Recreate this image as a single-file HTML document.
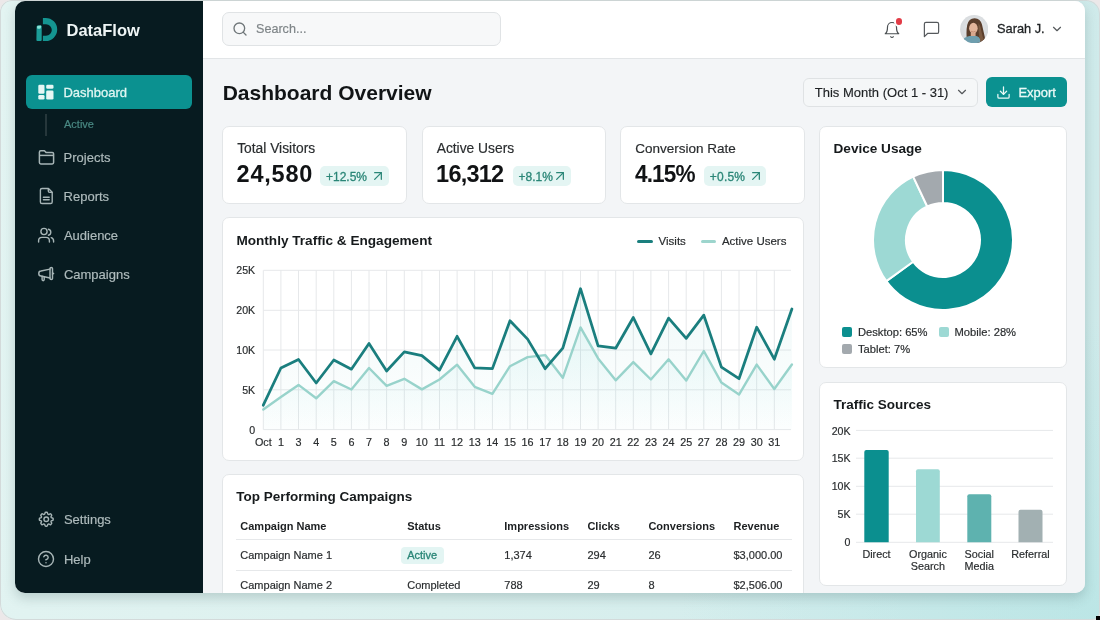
<!DOCTYPE html>
<html><head><meta charset="utf-8"><style>
*{margin:0;padding:0;box-sizing:border-box}
html,body{width:1100px;height:620px;overflow:hidden;background:#ece8e9;font-family:"Liberation Sans", sans-serif}
.a{position:absolute}
.t{position:absolute;white-space:nowrap}
.wrap{will-change:transform}
</style></head><body>

<div class="a" style="left:0px;top:0px;width:1100px;height:620px;border-radius:12px 14px 8px 16px;background:radial-gradient(ellipse 420px 300px at 100% 100%,rgba(180,228,228,0.7),rgba(180,228,228,0) 100%),linear-gradient(100deg,#e3f4f2 0%,#dbf0ee 45%,#d2ecec 80%,#cde9e9 100%);box-shadow:inset 0 0 0 1px #d3dada;"></div>
<div class="a" style="left:15px;top:1px;width:1070px;height:592px;border-radius:10px;box-shadow:0 5px 12px rgba(60,90,90,0.24);background:#f3f5f7;"></div>
<div class="a" style="left:15px;top:1px;width:1070px;height:592px;border-radius:10px;overflow:hidden;background:#f3f5f7">
<div class="a wrap" style="left:-15px;top:-1px;width:1100px;height:620px">
<div class="a" style="left:15px;top:1px;width:188px;height:592px;background:#071b20;"></div>
<svg class="a" style="left:34px;top:16px;" width="26" height="28" viewBox="0 0 26 28" fill="none"><path d="M8.9 2 H11.7 A11.5 11.5 0 0 1 11.7 25 H8.9 V19.8 H12 A5.8 5.8 0 0 0 12 8.2 H8.9 Z" fill="#149591"/>
<path d="M2.6 10.8 Q2.6 9.8 3.6 9.6 L6.8 9.4 Q7.7 9.4 7.7 10.3 V24 Q7.7 25 6.7 25 H3.4 Q2.4 25 2.4 24 Z" fill="#1b9d98"/>
<path d="M3 10.6 Q3.2 9.9 4 9.8 L6.6 9.6 Q7.2 9.6 7.1 10.4 L6.8 12.2 Q5 13 3.2 12.6 Z" fill="#86e3d6"/></svg>
<div class="t" style="left:66.50px;top:22.03px;font-size:16.5px;line-height:16.5px;color:#eef5f5;font-weight:700;">DataFlow</div>
<div class="a" style="left:26px;top:75px;width:166px;height:34px;border-radius:6px;background:#0b9190;"></div>
<svg class="a" style="left:38px;top:84px;" width="16" height="16" viewBox="0 0 16 16" fill="none"><rect x="0.3" y="0.7" width="6.2" height="9" rx="1.3" fill="#e6f7f4"/>
<rect x="0.3" y="10.9" width="6.2" height="4.6" rx="1.3" fill="#e6f7f4"/>
<rect x="8.2" y="0.7" width="7.3" height="4.1" rx="1.3" fill="#e6f7f4"/>
<rect x="8.2" y="6.5" width="7.3" height="9" rx="1.3" fill="#e6f7f4"/></svg>
<div class="t" style="left:63.40px;top:86.00px;font-size:13px;line-height:13px;color:#dff6f2;font-weight:400;-webkit-text-stroke:0.3px currentColor;">Dashboard</div>
<div class="a" style="left:45px;top:114px;width:2px;height:22px;background:#26373b;"></div>
<div class="t" style="left:64.00px;top:118.69px;font-size:11px;line-height:11px;color:#4a8a84;font-weight:400;-webkit-text-stroke:0.18px currentColor;">Active</div>
<svg class="a" style="left:36.6px;top:149px;" width="18" height="16" viewBox="0 0 18 16" fill="none"><g stroke="#a7b5b6" stroke-width="1.5" stroke-linejoin="round" fill="none">
<path d="M2.4 3.2 Q2.4 1.8 3.8 1.8 H7.4 L9 3.4 H15.2 Q16.6 3.4 16.6 4.8 V13.6 Q16.6 15 15.2 15 H3.8 Q2.4 15 2.4 13.6 Z"/>
<path d="M2.4 6.4 H16.6"/></g></svg>
<div class="t" style="left:63.60px;top:151.00px;font-size:13px;line-height:13px;color:#aebbbc;font-weight:400;-webkit-text-stroke:0.18px currentColor;">Projects</div>
<svg class="a" style="left:38px;top:187px;" width="17" height="18" viewBox="0 0 17 18" fill="none"><g stroke="#a7b5b6" stroke-width="1.4" stroke-linejoin="round" stroke-linecap="round" fill="none">
<path d="M10.5 1.5 H4 Q2.4 1.5 2.4 3.1 V14.9 Q2.4 16.5 4 16.5 H12.6 Q14.2 16.5 14.2 14.9 V5.2 Z"/>
<path d="M10.3 1.7 V4 Q10.3 5.4 11.7 5.4 H14"/>
<path d="M5.4 10.2 H11.2"/><path d="M5.4 12.8 H11.2"/></g></svg>
<div class="t" style="left:63.60px;top:190.00px;font-size:13px;line-height:13px;color:#aebbbc;font-weight:400;-webkit-text-stroke:0.18px currentColor;">Reports</div>
<svg class="a" style="left:37px;top:227px;" width="18" height="16" viewBox="0 0 18 16" fill="none"><g stroke="#a7b5b6" stroke-width="1.4" stroke-linecap="round" fill="none">
<circle cx="7" cy="4.5" r="3.1"/>
<path d="M1.6 15 V13.8 Q1.6 10.4 5 10.4 H9 Q12.4 10.4 12.4 13.8 V15"/>
<path d="M11.4 2.2 Q13.8 2.8 13.8 5.2 Q13.8 7.6 11.4 8.2"/>
<path d="M14.2 10.7 Q16.6 11.4 16.6 13.9 V15"/></g></svg>
<div class="t" style="left:63.90px;top:229.00px;font-size:13px;line-height:13px;color:#aebbbc;font-weight:400;-webkit-text-stroke:0.18px currentColor;">Audience</div>
<svg class="a" style="left:34px;top:262px;" width="24" height="24" viewBox="0 0 24 24" fill="none"><g stroke="#a7b5b6" stroke-width="1.45" stroke-linejoin="round" stroke-linecap="round" fill="none">
<path d="M16 7.1 L7 9 Q4.8 9 4.8 11.5 Q4.8 14 7 14 L16 16"/>
<path d="M16 6.6 Q16 5.5 17.25 5.5 Q18.5 5.5 18.5 6.6 V16.4 Q18.5 17.5 17.25 17.5 Q16 17.5 16 16.4 Z"/>
<path d="M18.5 10.8 L19.6 11.5 L18.5 12.2"/>
<path d="M8.1 14.3 V17.6 Q8.1 18.7 9.15 18.7 Q10.2 18.7 10.2 17.6 V14.7"/></g></svg>
<div class="t" style="left:63.90px;top:268.00px;font-size:13px;line-height:13px;color:#aebbbc;font-weight:400;-webkit-text-stroke:0.18px currentColor;">Campaigns</div>
<svg class="a" style="left:36.75px;top:510.15px;" width="18.5" height="18.5" viewBox="0 0 24 24" fill="none"><g stroke="#a7b5b6" stroke-width="1.8" stroke-linecap="round" stroke-linejoin="round"><path d="M10.343 3.94c.09-.542.56-.94 1.11-.94h1.093c.55 0 1.02.398 1.11.94l.149.894c.07.424.384.764.78.93.398.164.855.142 1.205-.108l.737-.527a1.125 1.125 0 0 1 1.45.12l.773.774c.39.389.44 1.002.12 1.45l-.527.737c-.25.35-.272.806-.107 1.204.165.397.505.71.93.78l.893.15c.543.09.94.559.94 1.109v1.094c0 .55-.397 1.02-.94 1.11l-.894.149c-.424.07-.764.383-.929.78-.165.398-.143.854.107 1.204l.527.738c.32.447.269 1.06-.12 1.45l-.774.773a1.125 1.125 0 0 1-1.449.12l-.738-.527c-.35-.25-.806-.272-1.203-.107-.398.165-.71.505-.781.929l-.149.894c-.09.542-.56.94-1.11.94h-1.094c-.55 0-1.019-.398-1.11-.94l-.148-.894c-.071-.424-.384-.764-.781-.93-.398-.164-.854-.142-1.204.108l-.738.527c-.447.32-1.06.269-1.45-.12l-.773-.774a1.125 1.125 0 0 1-.12-1.45l.527-.737c.25-.35.272-.806.108-1.204-.165-.397-.506-.71-.93-.78l-.894-.15c-.542-.09-.94-.56-.94-1.109v-1.094c0-.55.398-1.02.94-1.11l.894-.149c.424-.07.765-.383.93-.78.165-.398.143-.854-.108-1.204l-.526-.738a1.125 1.125 0 0 1 .12-1.45l.773-.773a1.125 1.125 0 0 1 1.45-.12l.737.527c.35.25.807.272 1.204.107.397-.165.71-.505.78-.929l.15-.894Z"/><path d="M15 12a3 3 0 1 1-6 0 3 3 0 0 1 6 0Z"/></g></svg>
<div class="t" style="left:63.90px;top:513.00px;font-size:13px;line-height:13px;color:#aebbbc;font-weight:400;-webkit-text-stroke:0.18px currentColor;">Settings</div>
<svg class="a" style="left:37px;top:550px;" width="18" height="18" viewBox="0 0 24 24" fill="none"><g stroke="#a7b5b6" stroke-width="1.9" stroke-linecap="round" stroke-linejoin="round"><circle cx="12" cy="12" r="10"/><path d="M9.09 9a3 3 0 0 1 5.83 1c0 2-3 3-3 3"/><path d="M12 17h.01"/></g></svg>
<div class="t" style="left:63.90px;top:553.00px;font-size:13px;line-height:13px;color:#aebbbc;font-weight:400;-webkit-text-stroke:0.18px currentColor;">Help</div>
<div class="a" style="left:203px;top:1px;width:882px;height:58px;background:#ffffff;border-bottom:1px solid #e2e5e7;"></div>
<div class="a" style="left:222px;top:12px;width:279px;height:34px;border-radius:7px;background:#f7f8f9;border:1px solid #e0e3e5;"></div>
<svg class="a" style="left:232px;top:21px;" width="16" height="16" viewBox="0 0 24 24" fill="none"><g stroke="#6f7679" stroke-width="2" stroke-linecap="round" stroke-linejoin="round"><circle cx="11" cy="11" r="8"/><path d="m21 21-4.3-4.3"/></g></svg>
<div class="t" style="left:256.00px;top:22.93px;font-size:12.6px;line-height:12.6px;color:#7f8588;font-weight:400;-webkit-text-stroke:0.18px currentColor;">Search...</div>
<svg class="a" style="left:883px;top:21px;" width="18" height="18" viewBox="0 0 24 24" fill="none"><g stroke="#4a4f52" stroke-width="1.6" stroke-linecap="round" stroke-linejoin="round"><path d="M6 8a6 6 0 0 1 12 0c0 7 3 9 3 9H3s3-2 3-9"/><path d="M10.3 21a1.94 1.94 0 0 0 3.4 0"/></g></svg>
<div class="a" style="left:893.5px;top:16.3px;width:10.4px;height:10.4px;border-radius:50%;background:#e23b46;border:2px solid #fff"></div>
<svg class="a" style="left:922px;top:20px;" width="19" height="19" viewBox="0 0 24 24" fill="none"><g stroke="#55595c" stroke-width="1.5" stroke-linecap="round" stroke-linejoin="round"><path d="M21 15a2 2 0 0 1-2 2H7l-4 4V5a2 2 0 0 1 2-2h14a2 2 0 0 1 2 2z"/></g></svg>
<svg class="a" style="left:960px;top:14.5px;" width="28.4" height="28.4" viewBox="0 0 28.4 28.4" fill="none"><defs><clipPath id="av"><circle cx="14.2" cy="14.2" r="14.1"/></clipPath>
<radialGradient id="avbg" cx="0.5" cy="0.4" r="0.6"><stop offset="0" stop-color="#e6e8ea"/><stop offset="1" stop-color="#d3d7da"/></radialGradient></defs>
<g clip-path="url(#av)"><rect width="30" height="30" fill="url(#avbg)"/>
<path d="M6.8 24 Q6 16 7.2 10 Q8.6 3.4 14.6 3.2 Q20.6 3.4 22 9.6 Q23.2 15 24.6 21 Q25.6 25 23 28 L14 29 Z" fill="#5a3e2c"/>
<path d="M18.5 8 Q21.5 12 21.8 18 Q22.6 23 24.4 25.5 L20 27 Q19 21 18.5 15 Z" fill="#7a5a42"/>
<ellipse cx="13.4" cy="13.2" rx="4.3" ry="5.4" fill="#e2b59b"/>
<path d="M11 16.2 Q13.2 18 15.6 16.2" stroke="#b97d66" stroke-width="0.7" fill="none"/>
<path d="M10.8 18 H15.6 V22 H10.8 Z" fill="#d7a88e"/>
<path d="M1 30 Q2.5 21.8 9.5 21 H16.5 Q19 21.4 20 24 L20.5 30 Z" fill="#6e9eae"/></g></svg>
<div class="t" style="left:997.00px;top:22.76px;font-size:12.8px;line-height:12.8px;color:#1f2224;font-weight:400;-webkit-text-stroke:0.3px currentColor;">Sarah J.</div>
<svg class="a" style="left:1049.5px;top:21.5px;" width="14" height="14" viewBox="0 0 24 24" fill="none"><g stroke="#55595c" stroke-width="2" stroke-linecap="round" stroke-linejoin="round"><path d="m6 9 6 6 6-6"/></g></svg>
<div class="t" style="left:222.70px;top:81.92px;font-size:21px;line-height:21px;color:#111416;font-weight:700;">Dashboard Overview</div>
<div class="a" style="left:803px;top:77.5px;width:175px;height:29.0px;border-radius:6px;background:#f5f7f8;border:1px solid #dfe2e4;"></div>
<div class="t" style="left:814.80px;top:86.20px;font-size:13px;line-height:13px;color:#1e2123;font-weight:400;-webkit-text-stroke:0.15px currentColor;">This Month (Oct 1 - 31)</div>
<svg class="a" style="left:955px;top:85px;" width="14" height="14" viewBox="0 0 24 24" fill="none"><g stroke="#55595c" stroke-width="2" stroke-linecap="round" stroke-linejoin="round"><path d="m6 9 6 6 6-6"/></g></svg>
<div class="a" style="left:986px;top:77px;width:81px;height:29.5px;border-radius:6px;background:#0b9190;"></div>
<svg class="a" style="left:996px;top:84.5px;" width="15" height="15" viewBox="0 0 24 24" fill="none"><g stroke="#eafaf7" stroke-width="2" stroke-linecap="round" stroke-linejoin="round"><path d="M21 15v4a2 2 0 0 1-2 2H5a2 2 0 0 1-2-2v-4"/><polyline points="7 10 12 15 17 10"/><line x1="12" x2="12" y1="15" y2="3"/></g></svg>
<div class="t" style="left:1018.40px;top:86.20px;font-size:13px;line-height:13px;color:#eafaf7;font-weight:400;-webkit-text-stroke:0.3px currentColor;">Export</div>
<div class="a" style="left:222px;top:125.5px;width:185px;height:78.0px;border-radius:7px;background:#ffffff;border:1px solid #e3e6e8;"></div>
<div class="t" style="left:237.20px;top:141.92px;font-size:13.8px;line-height:13.8px;color:#2a2d2f;font-weight:400;-webkit-text-stroke:0.18px currentColor;">Total Visitors</div>
<div class="t" style="left:236.60px;top:163.21px;font-size:23.5px;line-height:23.5px;color:#111315;font-weight:700;letter-spacing:0.78px;">24,580</div>
<div class="a" style="left:320px;top:166px;width:68.60000000000002px;height:20.400000000000006px;border-radius:5px;background:#e4f5f3;"></div>
<div class="t" style="left:326.00px;top:170.84px;font-size:12px;line-height:12px;color:#2a8677;font-weight:400;-webkit-text-stroke:0.3px currentColor;">+12.5%</div>
<svg class="a" style="left:370px;top:168px;" width="16" height="16" viewBox="0 0 24 24" fill="none"><g stroke="#2a8677" stroke-width="1.9" stroke-linecap="round" stroke-linejoin="round"><path d="M7 7h10v10"/><path d="M7 17 17 7"/></g></svg>
<div class="a" style="left:421.5px;top:125.5px;width:184.5px;height:78.0px;border-radius:7px;background:#ffffff;border:1px solid #e3e6e8;"></div>
<div class="t" style="left:436.70px;top:141.92px;font-size:13.8px;line-height:13.8px;color:#2a2d2f;font-weight:400;-webkit-text-stroke:0.18px currentColor;">Active Users</div>
<div class="t" style="left:436.10px;top:163.21px;font-size:23.5px;line-height:23.5px;color:#111315;font-weight:700;letter-spacing:-0.78px;">16,312</div>
<div class="a" style="left:512.5px;top:166px;width:58.5px;height:20.400000000000006px;border-radius:5px;background:#e4f5f3;"></div>
<div class="t" style="left:518.50px;top:170.84px;font-size:12px;line-height:12px;color:#2a8677;font-weight:400;-webkit-text-stroke:0.3px currentColor;">+8.1%</div>
<svg class="a" style="left:552px;top:168px;" width="16" height="16" viewBox="0 0 24 24" fill="none"><g stroke="#2a8677" stroke-width="1.9" stroke-linecap="round" stroke-linejoin="round"><path d="M7 7h10v10"/><path d="M7 17 17 7"/></g></svg>
<div class="a" style="left:620px;top:125.5px;width:184.5px;height:78.0px;border-radius:7px;background:#ffffff;border:1px solid #e3e6e8;"></div>
<div class="t" style="left:635.20px;top:142.17px;font-size:13.5px;line-height:13.5px;color:#2a2d2f;font-weight:400;-webkit-text-stroke:0.18px currentColor;">Conversion Rate</div>
<div class="t" style="left:634.60px;top:163.21px;font-size:23.5px;line-height:23.5px;color:#111315;font-weight:700;letter-spacing:-0.9px;transform:scaleX(0.96);transform-origin:0 0;">4.15%</div>
<div class="a" style="left:703.8px;top:166px;width:61.90000000000009px;height:20.400000000000006px;border-radius:5px;background:#e4f5f3;"></div>
<div class="t" style="left:709.80px;top:170.84px;font-size:12px;line-height:12px;color:#2a8677;font-weight:400;letter-spacing:0.2px;-webkit-text-stroke:0.3px currentColor;">+0.5%</div>
<svg class="a" style="left:747.7px;top:168px;" width="16" height="16" viewBox="0 0 24 24" fill="none"><g stroke="#2a8677" stroke-width="1.9" stroke-linecap="round" stroke-linejoin="round"><path d="M7 7h10v10"/><path d="M7 17 17 7"/></g></svg>
<div class="a" style="left:222px;top:217px;width:582px;height:243.5px;border-radius:7px;background:#ffffff;border:1px solid #e3e6e8;"></div>
<div class="t" style="left:236.40px;top:233.89px;font-size:13.6px;line-height:13.6px;color:#161a1c;font-weight:700;">Monthly Traffic &amp; Engagement</div>
<div class="a" style="left:636.8px;top:239.5px;width:16.0px;height:3.0px;border-radius:2px;background:#1a7f7e;"></div>
<div class="t" style="left:658.60px;top:236.07px;font-size:11.5px;line-height:11.5px;color:#2a2d2f;font-weight:400;-webkit-text-stroke:0.18px currentColor;">Visits</div>
<div class="a" style="left:700.6px;top:239.5px;width:15.699999999999932px;height:3.0px;border-radius:2px;background:#9dd5cd;"></div>
<div class="t" style="left:721.90px;top:236.07px;font-size:11.5px;line-height:11.5px;color:#2a2d2f;font-weight:400;-webkit-text-stroke:0.18px currentColor;">Active Users</div>
<svg class="a" style="left:0px;top:0px;" width="1100" height="620" viewBox="0 0 1100 620" fill="none"><defs>
<linearGradient id="gv" x1="0" y1="0" x2="0" y2="1"><stop offset="0" stop-color="#22a6a6" stop-opacity="0.07"/><stop offset="1" stop-color="#22a6a6" stop-opacity="0"/></linearGradient>
<linearGradient id="gu" x1="0" y1="0" x2="0" y2="1"><stop offset="0" stop-color="#5cd0cc" stop-opacity="0.10"/><stop offset="1" stop-color="#5cd0cc" stop-opacity="0.02"/></linearGradient>
</defs>
<line x1="263.4" x2="791" y1="270.3" y2="270.3" stroke="#e6e8ea" stroke-width="1"/><line x1="263.4" x2="791" y1="310.3" y2="310.3" stroke="#e6e8ea" stroke-width="1"/><line x1="263.4" x2="791" y1="350" y2="350" stroke="#e6e8ea" stroke-width="1"/><line x1="263.4" x2="791" y1="389.8" y2="389.8" stroke="#e6e8ea" stroke-width="1"/><line x1="263.4" x2="791" y1="429.6" y2="429.6" stroke="#e6e8ea" stroke-width="1"/><line x1="263.3" x2="263.3" y1="270.3" y2="429.6" stroke="#e6e8ea" stroke-width="1"/><line x1="280.9" x2="280.9" y1="270.3" y2="429.6" stroke="#e6e8ea" stroke-width="1"/><line x1="298.5" x2="298.5" y1="270.3" y2="429.6" stroke="#e6e8ea" stroke-width="1"/><line x1="316.2" x2="316.2" y1="270.3" y2="429.6" stroke="#e6e8ea" stroke-width="1"/><line x1="333.8" x2="333.8" y1="270.3" y2="429.6" stroke="#e6e8ea" stroke-width="1"/><line x1="351.4" x2="351.4" y1="270.3" y2="429.6" stroke="#e6e8ea" stroke-width="1"/><line x1="369.0" x2="369.0" y1="270.3" y2="429.6" stroke="#e6e8ea" stroke-width="1"/><line x1="386.6" x2="386.6" y1="270.3" y2="429.6" stroke="#e6e8ea" stroke-width="1"/><line x1="404.3" x2="404.3" y1="270.3" y2="429.6" stroke="#e6e8ea" stroke-width="1"/><line x1="421.9" x2="421.9" y1="270.3" y2="429.6" stroke="#e6e8ea" stroke-width="1"/><line x1="439.5" x2="439.5" y1="270.3" y2="429.6" stroke="#e6e8ea" stroke-width="1"/><line x1="457.1" x2="457.1" y1="270.3" y2="429.6" stroke="#e6e8ea" stroke-width="1"/><line x1="474.7" x2="474.7" y1="270.3" y2="429.6" stroke="#e6e8ea" stroke-width="1"/><line x1="492.4" x2="492.4" y1="270.3" y2="429.6" stroke="#e6e8ea" stroke-width="1"/><line x1="510.0" x2="510.0" y1="270.3" y2="429.6" stroke="#e6e8ea" stroke-width="1"/><line x1="527.6" x2="527.6" y1="270.3" y2="429.6" stroke="#e6e8ea" stroke-width="1"/><line x1="545.2" x2="545.2" y1="270.3" y2="429.6" stroke="#e6e8ea" stroke-width="1"/><line x1="562.8" x2="562.8" y1="270.3" y2="429.6" stroke="#e6e8ea" stroke-width="1"/><line x1="580.5" x2="580.5" y1="270.3" y2="429.6" stroke="#e6e8ea" stroke-width="1"/><line x1="598.1" x2="598.1" y1="270.3" y2="429.6" stroke="#e6e8ea" stroke-width="1"/><line x1="615.7" x2="615.7" y1="270.3" y2="429.6" stroke="#e6e8ea" stroke-width="1"/><line x1="633.3" x2="633.3" y1="270.3" y2="429.6" stroke="#e6e8ea" stroke-width="1"/><line x1="650.9" x2="650.9" y1="270.3" y2="429.6" stroke="#e6e8ea" stroke-width="1"/><line x1="668.6" x2="668.6" y1="270.3" y2="429.6" stroke="#e6e8ea" stroke-width="1"/><line x1="686.2" x2="686.2" y1="270.3" y2="429.6" stroke="#e6e8ea" stroke-width="1"/><line x1="703.8" x2="703.8" y1="270.3" y2="429.6" stroke="#e6e8ea" stroke-width="1"/><line x1="721.4" x2="721.4" y1="270.3" y2="429.6" stroke="#e6e8ea" stroke-width="1"/><line x1="739.0" x2="739.0" y1="270.3" y2="429.6" stroke="#e6e8ea" stroke-width="1"/><line x1="756.7" x2="756.7" y1="270.3" y2="429.6" stroke="#e6e8ea" stroke-width="1"/><line x1="774.3" x2="774.3" y1="270.3" y2="429.6" stroke="#e6e8ea" stroke-width="1"/>
<polygon points="263.3,429.6 263.3,405.2 280.9,368 298.5,359.5 316.2,383 333.8,360 351.4,369.2 369.0,343.5 386.6,371 404.3,351.9 421.9,355.6 439.5,370.1 457.1,336.3 474.7,367.9 492.4,368.6 510.0,320.7 527.6,339.1 545.2,368.7 562.8,348.2 580.5,288.7 598.1,345.8 615.7,348.2 633.3,317.5 650.9,353.9 668.6,318.1 686.2,338.4 703.8,315.2 721.4,367.1 739.0,378.7 756.7,327.2 774.3,359.2 791.9,309 791.9,429.6" fill="url(#gv)"/>
<polygon points="263.3,429.6 263.3,409.6 280.9,397 298.5,384.9 316.2,398.3 333.8,381.1 351.4,389.5 369.0,368 386.6,385.8 404.3,378.8 421.9,389.4 439.5,379.5 457.1,364.7 474.7,386.8 492.4,393.8 510.0,366.2 527.6,357.1 545.2,355.1 562.8,377.8 580.5,327.4 598.1,358.4 615.7,380.3 633.3,362.1 650.9,379.5 668.6,359.3 686.2,380.6 703.8,351 721.4,382.6 739.0,394.6 756.7,364.6 774.3,389 791.9,364.5 791.9,429.6" fill="url(#gu)"/>
<polyline points="263.3,409.6 280.9,397 298.5,384.9 316.2,398.3 333.8,381.1 351.4,389.5 369.0,368 386.6,385.8 404.3,378.8 421.9,389.4 439.5,379.5 457.1,364.7 474.7,386.8 492.4,393.8 510.0,366.2 527.6,357.1 545.2,355.1 562.8,377.8 580.5,327.4 598.1,358.4 615.7,380.3 633.3,362.1 650.9,379.5 668.6,359.3 686.2,380.6 703.8,351 721.4,382.6 739.0,394.6 756.7,364.6 774.3,389 791.9,364.5" stroke="#98d3cb" stroke-width="2.4" stroke-linejoin="round" stroke-linecap="round" fill="none"/>
<polyline points="263.3,405.2 280.9,368 298.5,359.5 316.2,383 333.8,360 351.4,369.2 369.0,343.5 386.6,371 404.3,351.9 421.9,355.6 439.5,370.1 457.1,336.3 474.7,367.9 492.4,368.6 510.0,320.7 527.6,339.1 545.2,368.7 562.8,348.2 580.5,288.7 598.1,345.8 615.7,348.2 633.3,317.5 650.9,353.9 668.6,318.1 686.2,338.4 703.8,315.2 721.4,367.1 739.0,378.7 756.7,327.2 774.3,359.2 791.9,309" stroke="#1a7e7e" stroke-width="2.75" stroke-linejoin="round" stroke-linecap="round" fill="none"/>
</svg>
<div class="t" style="left:255.20px;top:265.33px;font-size:10.6px;line-height:10.6px;color:#2a2d2f;font-weight:400;transform:translateX(-100%);-webkit-text-stroke:0.18px currentColor;">25K</div>
<div class="t" style="left:255.20px;top:305.23px;font-size:10.6px;line-height:10.6px;color:#2a2d2f;font-weight:400;transform:translateX(-100%);-webkit-text-stroke:0.18px currentColor;">20K</div>
<div class="t" style="left:255.20px;top:345.03px;font-size:10.6px;line-height:10.6px;color:#2a2d2f;font-weight:400;transform:translateX(-100%);-webkit-text-stroke:0.18px currentColor;">10K</div>
<div class="t" style="left:255.20px;top:384.83px;font-size:10.6px;line-height:10.6px;color:#2a2d2f;font-weight:400;transform:translateX(-100%);-webkit-text-stroke:0.18px currentColor;">5K</div>
<div class="t" style="left:255.20px;top:424.63px;font-size:10.6px;line-height:10.6px;color:#2a2d2f;font-weight:400;transform:translateX(-100%);-webkit-text-stroke:0.18px currentColor;">0</div>
<div class="t" style="left:263.30px;top:436.86px;font-size:10.8px;line-height:10.8px;color:#2a2d2f;font-weight:400;transform:translateX(-50%);-webkit-text-stroke:0.18px currentColor;">Oct</div>
<div class="t" style="left:280.92px;top:436.86px;font-size:10.8px;line-height:10.8px;color:#2a2d2f;font-weight:400;transform:translateX(-50%);-webkit-text-stroke:0.18px currentColor;">1</div>
<div class="t" style="left:298.54px;top:436.86px;font-size:10.8px;line-height:10.8px;color:#2a2d2f;font-weight:400;transform:translateX(-50%);-webkit-text-stroke:0.18px currentColor;">3</div>
<div class="t" style="left:316.16px;top:436.86px;font-size:10.8px;line-height:10.8px;color:#2a2d2f;font-weight:400;transform:translateX(-50%);-webkit-text-stroke:0.18px currentColor;">4</div>
<div class="t" style="left:333.78px;top:436.86px;font-size:10.8px;line-height:10.8px;color:#2a2d2f;font-weight:400;transform:translateX(-50%);-webkit-text-stroke:0.18px currentColor;">5</div>
<div class="t" style="left:351.40px;top:436.86px;font-size:10.8px;line-height:10.8px;color:#2a2d2f;font-weight:400;transform:translateX(-50%);-webkit-text-stroke:0.18px currentColor;">6</div>
<div class="t" style="left:369.02px;top:436.86px;font-size:10.8px;line-height:10.8px;color:#2a2d2f;font-weight:400;transform:translateX(-50%);-webkit-text-stroke:0.18px currentColor;">7</div>
<div class="t" style="left:386.64px;top:436.86px;font-size:10.8px;line-height:10.8px;color:#2a2d2f;font-weight:400;transform:translateX(-50%);-webkit-text-stroke:0.18px currentColor;">8</div>
<div class="t" style="left:404.26px;top:436.86px;font-size:10.8px;line-height:10.8px;color:#2a2d2f;font-weight:400;transform:translateX(-50%);-webkit-text-stroke:0.18px currentColor;">9</div>
<div class="t" style="left:421.88px;top:436.86px;font-size:10.8px;line-height:10.8px;color:#2a2d2f;font-weight:400;transform:translateX(-50%);-webkit-text-stroke:0.18px currentColor;">10</div>
<div class="t" style="left:439.50px;top:436.86px;font-size:10.8px;line-height:10.8px;color:#2a2d2f;font-weight:400;transform:translateX(-50%);-webkit-text-stroke:0.18px currentColor;">11</div>
<div class="t" style="left:457.12px;top:436.86px;font-size:10.8px;line-height:10.8px;color:#2a2d2f;font-weight:400;transform:translateX(-50%);-webkit-text-stroke:0.18px currentColor;">12</div>
<div class="t" style="left:474.74px;top:436.86px;font-size:10.8px;line-height:10.8px;color:#2a2d2f;font-weight:400;transform:translateX(-50%);-webkit-text-stroke:0.18px currentColor;">13</div>
<div class="t" style="left:492.36px;top:436.86px;font-size:10.8px;line-height:10.8px;color:#2a2d2f;font-weight:400;transform:translateX(-50%);-webkit-text-stroke:0.18px currentColor;">14</div>
<div class="t" style="left:509.98px;top:436.86px;font-size:10.8px;line-height:10.8px;color:#2a2d2f;font-weight:400;transform:translateX(-50%);-webkit-text-stroke:0.18px currentColor;">15</div>
<div class="t" style="left:527.60px;top:436.86px;font-size:10.8px;line-height:10.8px;color:#2a2d2f;font-weight:400;transform:translateX(-50%);-webkit-text-stroke:0.18px currentColor;">16</div>
<div class="t" style="left:545.22px;top:436.86px;font-size:10.8px;line-height:10.8px;color:#2a2d2f;font-weight:400;transform:translateX(-50%);-webkit-text-stroke:0.18px currentColor;">17</div>
<div class="t" style="left:562.84px;top:436.86px;font-size:10.8px;line-height:10.8px;color:#2a2d2f;font-weight:400;transform:translateX(-50%);-webkit-text-stroke:0.18px currentColor;">18</div>
<div class="t" style="left:580.46px;top:436.86px;font-size:10.8px;line-height:10.8px;color:#2a2d2f;font-weight:400;transform:translateX(-50%);-webkit-text-stroke:0.18px currentColor;">19</div>
<div class="t" style="left:598.08px;top:436.86px;font-size:10.8px;line-height:10.8px;color:#2a2d2f;font-weight:400;transform:translateX(-50%);-webkit-text-stroke:0.18px currentColor;">20</div>
<div class="t" style="left:615.70px;top:436.86px;font-size:10.8px;line-height:10.8px;color:#2a2d2f;font-weight:400;transform:translateX(-50%);-webkit-text-stroke:0.18px currentColor;">21</div>
<div class="t" style="left:633.32px;top:436.86px;font-size:10.8px;line-height:10.8px;color:#2a2d2f;font-weight:400;transform:translateX(-50%);-webkit-text-stroke:0.18px currentColor;">22</div>
<div class="t" style="left:650.94px;top:436.86px;font-size:10.8px;line-height:10.8px;color:#2a2d2f;font-weight:400;transform:translateX(-50%);-webkit-text-stroke:0.18px currentColor;">23</div>
<div class="t" style="left:668.56px;top:436.86px;font-size:10.8px;line-height:10.8px;color:#2a2d2f;font-weight:400;transform:translateX(-50%);-webkit-text-stroke:0.18px currentColor;">24</div>
<div class="t" style="left:686.18px;top:436.86px;font-size:10.8px;line-height:10.8px;color:#2a2d2f;font-weight:400;transform:translateX(-50%);-webkit-text-stroke:0.18px currentColor;">25</div>
<div class="t" style="left:703.80px;top:436.86px;font-size:10.8px;line-height:10.8px;color:#2a2d2f;font-weight:400;transform:translateX(-50%);-webkit-text-stroke:0.18px currentColor;">27</div>
<div class="t" style="left:721.42px;top:436.86px;font-size:10.8px;line-height:10.8px;color:#2a2d2f;font-weight:400;transform:translateX(-50%);-webkit-text-stroke:0.18px currentColor;">28</div>
<div class="t" style="left:739.04px;top:436.86px;font-size:10.8px;line-height:10.8px;color:#2a2d2f;font-weight:400;transform:translateX(-50%);-webkit-text-stroke:0.18px currentColor;">29</div>
<div class="t" style="left:756.66px;top:436.86px;font-size:10.8px;line-height:10.8px;color:#2a2d2f;font-weight:400;transform:translateX(-50%);-webkit-text-stroke:0.18px currentColor;">30</div>
<div class="t" style="left:774.28px;top:436.86px;font-size:10.8px;line-height:10.8px;color:#2a2d2f;font-weight:400;transform:translateX(-50%);-webkit-text-stroke:0.18px currentColor;">31</div>
<div class="a" style="left:222px;top:474px;width:582px;height:146px;border-radius:7px;background:#ffffff;border:1px solid #e3e6e8;"></div>
<div class="t" style="left:236.30px;top:490.37px;font-size:13.5px;line-height:13.5px;color:#161a1c;font-weight:700;">Top Performing Campaigns</div>
<div class="t" style="left:240.30px;top:521.29px;font-size:11px;line-height:11px;color:#1c1f21;font-weight:700;">Campaign Name</div>
<div class="t" style="left:407.20px;top:521.29px;font-size:11px;line-height:11px;color:#1c1f21;font-weight:700;">Status</div>
<div class="t" style="left:504.30px;top:521.29px;font-size:11px;line-height:11px;color:#1c1f21;font-weight:700;">Impressions</div>
<div class="t" style="left:587.40px;top:521.29px;font-size:11px;line-height:11px;color:#1c1f21;font-weight:700;">Clicks</div>
<div class="t" style="left:648.40px;top:521.29px;font-size:11px;line-height:11px;color:#1c1f21;font-weight:700;">Conversions</div>
<div class="t" style="left:733.50px;top:521.29px;font-size:11px;line-height:11px;color:#1c1f21;font-weight:700;">Revenue</div>
<div class="a" style="left:236px;top:539px;width:556px;height:1px;background:#e6e8ea;"></div>
<div class="a" style="left:236px;top:569.5px;width:556px;height:1.0px;background:#e6e8ea;"></div>
<div class="a" style="left:401.3px;top:546.5px;width:43.0px;height:17.0px;border-radius:4px;background:#e3f5f3;"></div>
<div class="t" style="left:407.20px;top:550.29px;font-size:11px;line-height:11px;color:#2a8677;font-weight:400;-webkit-text-stroke:0.3px currentColor;">Active</div>
<div class="t" style="left:240.30px;top:550.29px;font-size:11px;line-height:11px;color:#2a2d2f;font-weight:400;-webkit-text-stroke:0.18px currentColor;">Campaign Name 1</div>
<div class="t" style="left:504.30px;top:550.29px;font-size:11px;line-height:11px;color:#2a2d2f;font-weight:400;-webkit-text-stroke:0.18px currentColor;">1,374</div>
<div class="t" style="left:587.40px;top:550.29px;font-size:11px;line-height:11px;color:#2a2d2f;font-weight:400;-webkit-text-stroke:0.18px currentColor;">294</div>
<div class="t" style="left:648.40px;top:550.29px;font-size:11px;line-height:11px;color:#2a2d2f;font-weight:400;-webkit-text-stroke:0.18px currentColor;">26</div>
<div class="t" style="left:733.50px;top:550.29px;font-size:11px;line-height:11px;color:#2a2d2f;font-weight:400;-webkit-text-stroke:0.18px currentColor;">$3,000.00</div>
<div class="t" style="left:240.30px;top:579.69px;font-size:11px;line-height:11px;color:#2a2d2f;font-weight:400;-webkit-text-stroke:0.18px currentColor;">Campaign Name 2</div>
<div class="t" style="left:407.20px;top:579.69px;font-size:11px;line-height:11px;color:#2a2d2f;font-weight:400;-webkit-text-stroke:0.18px currentColor;">Completed</div>
<div class="t" style="left:504.30px;top:579.69px;font-size:11px;line-height:11px;color:#2a2d2f;font-weight:400;-webkit-text-stroke:0.18px currentColor;">788</div>
<div class="t" style="left:587.40px;top:579.69px;font-size:11px;line-height:11px;color:#2a2d2f;font-weight:400;-webkit-text-stroke:0.18px currentColor;">29</div>
<div class="t" style="left:648.40px;top:579.69px;font-size:11px;line-height:11px;color:#2a2d2f;font-weight:400;-webkit-text-stroke:0.18px currentColor;">8</div>
<div class="t" style="left:733.50px;top:579.69px;font-size:11px;line-height:11px;color:#2a2d2f;font-weight:400;-webkit-text-stroke:0.18px currentColor;">$2,506.00</div>
<div class="a" style="left:819.4px;top:126px;width:247.60000000000002px;height:242px;border-radius:7px;background:#ffffff;border:1px solid #e3e6e8;"></div>
<div class="t" style="left:833.50px;top:142.49px;font-size:13.6px;line-height:13.6px;color:#161a1c;font-weight:700;">Device Usage</div>
<svg class="a" style="left:0px;top:0px;" width="1100" height="620" viewBox="0 0 1100 620" fill="none"><path d="M943.00,170.00 A70,70 0 1 1 886.37,281.14 L913.07,261.75 A37,37 0 1 0 943.00,203.00 Z" fill="#0b8f8f" stroke="#ffffff" stroke-width="2" stroke-linejoin="round"/><path d="M886.37,281.14 A70,70 0 0 1 913.20,176.66 L927.25,206.52 A37,37 0 0 0 913.07,261.75 Z" fill="#9dd9d4" stroke="#ffffff" stroke-width="2" stroke-linejoin="round"/><path d="M913.20,176.66 A70,70 0 0 1 943.00,170.00 L943.00,203.00 A37,37 0 0 0 927.25,206.52 Z" fill="#a3a9ae" stroke="#ffffff" stroke-width="2" stroke-linejoin="round"/></svg>
<div class="a" style="left:842.4px;top:326.8px;width:10.0px;height:10.0px;border-radius:2px;background:#0b8f8f;"></div>
<div class="t" style="left:857.90px;top:326.92px;font-size:11.2px;line-height:11.2px;color:#2a2d2f;font-weight:400;-webkit-text-stroke:0.18px currentColor;">Desktop: 65%</div>
<div class="a" style="left:939px;top:326.8px;width:10px;height:10.0px;border-radius:2px;background:#9dd9d4;"></div>
<div class="t" style="left:954.50px;top:326.92px;font-size:11.2px;line-height:11.2px;color:#2a2d2f;font-weight:400;-webkit-text-stroke:0.18px currentColor;">Mobile: 28%</div>
<div class="a" style="left:842.4px;top:344.3px;width:10.0px;height:10.0px;border-radius:2px;background:#a3a9ae;"></div>
<div class="t" style="left:857.90px;top:344.42px;font-size:11.2px;line-height:11.2px;color:#2a2d2f;font-weight:400;-webkit-text-stroke:0.18px currentColor;">Tablet: 7%</div>
<div class="a" style="left:819.4px;top:382px;width:247.60000000000002px;height:203.5px;border-radius:7px;background:#ffffff;border:1px solid #e3e6e8;"></div>
<div class="t" style="left:833.40px;top:398.17px;font-size:13.5px;line-height:13.5px;color:#161a1c;font-weight:700;">Traffic Sources</div>
<svg class="a" style="left:0px;top:0px;" width="1100" height="620" viewBox="0 0 1100 620" fill="none"><line x1="856" x2="1053" y1="430.4" y2="430.4" stroke="#e6e8ea" stroke-width="1"/><line x1="856" x2="1053" y1="458.2" y2="458.2" stroke="#e6e8ea" stroke-width="1"/><line x1="856" x2="1053" y1="486.3" y2="486.3" stroke="#e6e8ea" stroke-width="1"/><line x1="856" x2="1053" y1="514.2" y2="514.2" stroke="#e6e8ea" stroke-width="1"/><line x1="856" x2="1053" y1="542.3" y2="542.3" stroke="#e6e8ea" stroke-width="1"/><path d="M864.3,542.3 V452 Q864.3,450 866.3,450 H886.7 Q888.7,450 888.7,452 V542.3 Z" fill="#0b8f8f"/><path d="M916,542.3 V471.2 Q916,469.2 918,469.2 H937.8 Q939.8,469.2 939.8,471.2 V542.3 Z" fill="#9dd9d4"/><path d="M967.3,542.3 V496.3 Q967.3,494.3 969.3,494.3 H989.3 Q991.3,494.3 991.3,496.3 V542.3 Z" fill="#5eb2af"/><path d="M1018.5,542.3 V511.7 Q1018.5,509.7 1020.5,509.7 H1040.5 Q1042.5,509.7 1042.5,511.7 V542.3 Z" fill="#a2b0b2"/></svg>
<div class="t" style="left:850.50px;top:425.53px;font-size:10.6px;line-height:10.6px;color:#2a2d2f;font-weight:400;transform:translateX(-100%);-webkit-text-stroke:0.18px currentColor;">20K</div>
<div class="t" style="left:850.50px;top:453.33px;font-size:10.6px;line-height:10.6px;color:#2a2d2f;font-weight:400;transform:translateX(-100%);-webkit-text-stroke:0.18px currentColor;">15K</div>
<div class="t" style="left:850.50px;top:481.43px;font-size:10.6px;line-height:10.6px;color:#2a2d2f;font-weight:400;transform:translateX(-100%);-webkit-text-stroke:0.18px currentColor;">10K</div>
<div class="t" style="left:850.50px;top:509.33px;font-size:10.6px;line-height:10.6px;color:#2a2d2f;font-weight:400;transform:translateX(-100%);-webkit-text-stroke:0.18px currentColor;">5K</div>
<div class="t" style="left:850.50px;top:537.43px;font-size:10.6px;line-height:10.6px;color:#2a2d2f;font-weight:400;transform:translateX(-100%);-webkit-text-stroke:0.18px currentColor;">0</div>
<div class="t" style="left:876.50px;top:549.06px;font-size:10.8px;line-height:10.8px;color:#2a2d2f;font-weight:400;transform:translateX(-50%);-webkit-text-stroke:0.18px currentColor;">Direct</div>
<div class="t" style="left:927.90px;top:549.06px;font-size:10.8px;line-height:10.8px;color:#2a2d2f;font-weight:400;transform:translateX(-50%);-webkit-text-stroke:0.18px currentColor;">Organic</div>
<div class="t" style="left:927.90px;top:560.66px;font-size:10.8px;line-height:10.8px;color:#2a2d2f;font-weight:400;transform:translateX(-50%);-webkit-text-stroke:0.18px currentColor;">Search</div>
<div class="t" style="left:979.30px;top:549.06px;font-size:10.8px;line-height:10.8px;color:#2a2d2f;font-weight:400;transform:translateX(-50%);-webkit-text-stroke:0.18px currentColor;">Social</div>
<div class="t" style="left:979.30px;top:560.66px;font-size:10.8px;line-height:10.8px;color:#2a2d2f;font-weight:400;transform:translateX(-50%);-webkit-text-stroke:0.18px currentColor;">Media</div>
<div class="t" style="left:1030.50px;top:549.06px;font-size:10.8px;line-height:10.8px;color:#2a2d2f;font-weight:400;transform:translateX(-50%);-webkit-text-stroke:0.18px currentColor;">Referral</div>
</div></div>
<div class="a" style="left:1096px;top:616px;width:4px;height:4px;background:#000;"></div>
</body></html>
